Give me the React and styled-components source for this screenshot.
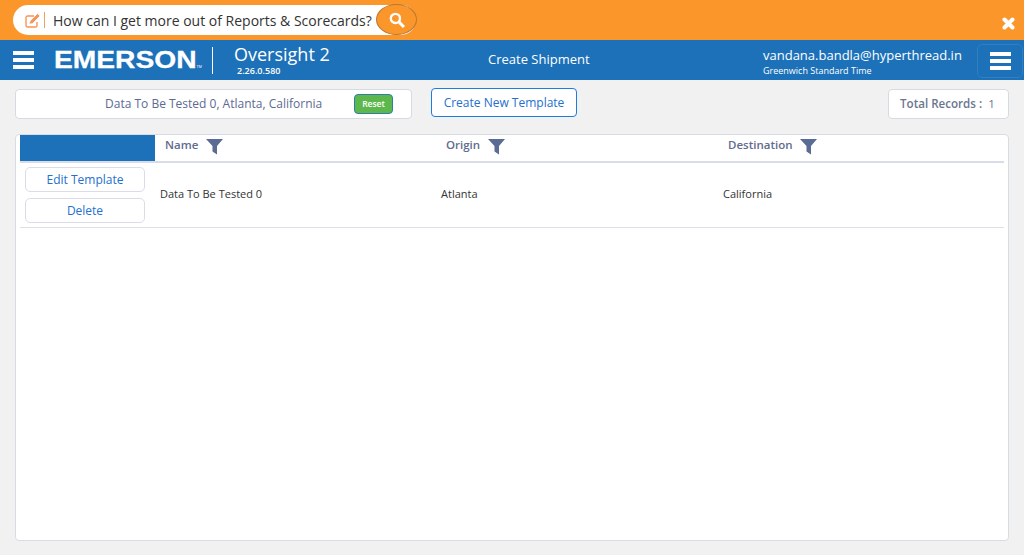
import React from "react";
import styled, { createGlobalStyle } from "styled-components";

const GlobalStyle = createGlobalStyle`
  html, body {
    margin: 0;
    height: 100%;
    background: #f1f1f1;
    font-family: "Open Sans", "Liberation Sans", sans-serif;
  }
  * { box-sizing: border-box; }
`;
const Page = styled.div`
  width: 1024px;
  height: 555px;
  display: flex;
  flex-direction: column;
  overflow: hidden;
`;
const Banner = styled.div`
  height: 40px;
  flex: none;
  background: #fb962b;
  display: flex;
  justify-content: space-between;
  padding: 5px 9px 0 13px;
`;
const SearchPill = styled.div`
  width: 403px;
  height: 30px;
  background: #fff;
  border-radius: 15px;
  display: flex;
  align-items: center;
  padding-left: 12px;
  position: relative;
`;
const Divider = styled.span`
  width: 1px;
  height: 16px;
  background: #f0a060;
  margin: 0 8px 0 3px;
`;
const Question = styled.span`
  font-size: 14px;
  color: #333;
  white-space: nowrap;
`;
const SearchButton = styled.span`
  position: absolute;
  left: 363px;
  top: -1px;
  width: 41px;
  height: 31px;
  border-radius: 50%;
  background: #fb962b;
  border: 1px solid #b9772f;
  display: flex;
  align-items: center;
  justify-content: center;
`;
const CloseMark = styled.svg`
  margin-top: 12px;
  width: 13px;
  height: 13px;
`;
const Nav = styled.div`
  height: 40px;
  flex: none;
  background: #1c71b9;
  display: flex;
  align-items: center;
  color: #fff;
  padding-left: 13px;
`;
const Burger = styled.div`
  width: 21px;
  height: 18px;
  display: flex;
  flex-direction: column;
  justify-content: space-between;
  & > i {
    display: block;
    height: 4px;
    background: #fff;
  }
`;
const Logo = styled.span`
  margin-left: 20px;
  width: 146px;
  font: 700 23.5px/40px "Liberation Sans", sans-serif;
  transform: scaleX(1.2);
  transform-origin: left center;
  white-space: nowrap;
  -webkit-text-stroke: 0.3px #fff;
`;
const LogoMark = styled.span`
  font-size: 3px;
  font-weight: 400;
  line-height: 0;
  -webkit-text-stroke: 0;
`;
const Rule = styled.span`
  width: 1px;
  height: 27px;
  background: #fff;
  margin-left: 12px;
`;
const Product = styled.div`
  margin-left: 21px;
  width: 254px;
  height: 40px;
  display: flex;
  flex-direction: column;
  padding-top: 3px;
`;
const ProductName = styled.span`
  font-size: 18px;
  line-height: 22px;
`;
const Version = styled.span`
  font-size: 9px;
  line-height: 11px;
  font-weight: 600;
  padding-left: 3px;
`;
const PageTitle = styled.span`
  font-size: 13px;
  width: 275px;
  margin-top: -2px;
`;
const User = styled.div`
  width: 214px;
  height: 40px;
  display: flex;
  flex-direction: column;
  padding-top: 6px;
`;
const Email = styled.span`
  font-size: 13px;
  line-height: 18px;
`;
const Zone = styled.span`
  font-size: 9px;
  line-height: 14px;
  font-weight: 500;
`;
const MenuButton = styled.div`
  width: 46px;
  height: 34px;
  margin-top: 2px;
  border: 1px solid #2f7fc2;
  border-radius: 5px;
  display: flex;
  align-items: center;
  justify-content: center;
`;
const Toolbar = styled.div`
  height: 54px;
  flex: none;
  padding: 8px 15px 0;
  display: flex;
  align-items: flex-start;
`;
const FilterBox = styled.div`
  width: 397px;
  height: 30px;
  margin-top: 1px;
  background: #fff;
  border: 1px solid #d5dae3;
  border-radius: 4px;
  display: flex;
  align-items: center;
  padding-left: 89px;
  font-size: 12px;
  color: #5c6a94;
`;
const FilterText = styled.span`
  width: 249px;
  white-space: nowrap;
  margin-top: -1px;
`;
const ResetButton = styled.span`
  width: 39px;
  height: 20px;
  padding-bottom: 1px;
  background: #5cb84c;
  border: 1px solid #2f7fa5;
  border-radius: 4px;
  color: #fff;
  font-size: 8.5px;
  font-weight: 600;
  display: flex;
  align-items: center;
  justify-content: center;
`;
const NewTemplate = styled.span`
  margin-left: 19px;
  width: 146px;
  height: 29px;
  background: #fff;
  border: 1px solid #1a7de0;
  border-radius: 4px;
  color: #2470d0;
  font-size: 12px;
  display: flex;
  align-items: center;
  justify-content: center;
`;
const Total = styled.div`
  margin-left: auto;
  width: 121px;
  height: 30px;
  margin-top: 1px;
  padding: 0 11px 2px;
  background: #fff;
  border: 1px solid #d5dae3;
  border-radius: 4px;
  font-size: 11.6px;
  color: #6a7690;
  display: flex;
  align-items: center;
  gap: 6px;
  & > b { font-weight: 600; }
`;
const Panel = styled.div`
  width: 994px;
  height: 407px;
  margin-left: 15px;
  background: #fff;
  border: 1px solid #d8dce5;
  border-radius: 4px;
  padding: 0 4px;
`;
const HeadRow = styled.div`
  display: grid;
  grid-template-columns: 135px 282px 282px 1fr;
  height: 28px;
  border-bottom: 2px solid #d8dce8;
`;
const BlueCell = styled.div`
  background: #1c71b9;
  height: 26px;
`;
const HeadCell = styled.div`
  display: flex;
  align-items: flex-start;
  gap: 8px;
  padding: 2px 0 0 9px;
  font-size: 11.5px;
  font-weight: 600;
  color: #5f6c8e;
  line-height: 16px;
  &:nth-child(2) {
    padding-left: 10px;
  }
`;
const Funnel = styled.svg`
  width: 17px;
  height: 17px;
  margin-top: 1px;
`;
const BodyRow = styled.div`
  display: grid;
  grid-template-columns: 135px 282px 282px 1fr;
  height: 65px;
  border-bottom: 1px solid #dcdfe6;
  align-items: center;
`;
const Actions = styled.div`
  display: flex;
  flex-direction: column;
  gap: 6px;
  padding-left: 5px;
`;
const ActionButton = styled.span`
  width: 120px;
  height: 25px;
  padding-bottom: 1px;
  border: 1px solid #dadde8;
  border-radius: 5px;
  background: #fff;
  color: #2470d0;
  font-size: 12px;
  display: flex;
  align-items: center;
  justify-content: center;
`;
const Cell = styled.span`
  font-size: 11px;
  color: #333;
  padding: 0 0 4px 5px;
  &:nth-child(n + 3) {
    padding-left: 4px;
  }
`;

const FunnelIcon = () => (
  <Funnel viewBox="0 0 17 17">
    <path d="M0 1h17l-6 7v8.5l-4.500-3V8z" fill="#5a6b94" />
  </Funnel>
);
const Bars = () => (
  <Burger>
    <i />
    <i />
    <i />
  </Burger>
);

export default function App() {
  return (
    <Page>
      <GlobalStyle />
      <Banner>
        <SearchPill>
          <svg width="16" height="15" viewBox="0 0 16 15" fill="none" stroke="#f5955a" strokeWidth="1.400">
            <path d="M12 9v3.500a1.500 1.500 0 0 1-1.500 1.500h-8A1.500 1.500 0 0 1 1 12.500v-8A1.500 1.500 0 0 1 2.500 3H9" />
            <path d="M5 8l-.8 3.300L7.500 10.500l7.500-7.500-2.500-2.500z" fill="#f5955a" stroke="#fff" strokeWidth="0.700" />
          </svg>
          <Divider />
          <Question>How can I get more out of Reports &amp; Scorecards?</Question>
          <SearchButton>
            <svg width="16" height="16" viewBox="0 0 15 15" fill="none" stroke="#fff">
              <circle cx="6" cy="6" r="4.300" strokeWidth="2.200" />
              <path d="M9.500 9.500L14 14" strokeWidth="2.800" />
            </svg>
          </SearchButton>
        </SearchPill>
        <CloseMark viewBox="0 0 13 13">
          <path d="M2.500 2.500l8 8M10.500 2.500l-8 8" stroke="#fff" strokeWidth="4" strokeLinecap="round" />
        </CloseMark>
      </Banner>
      <Nav>
        <Bars />
        <Logo>
          EMERSON<LogoMark>TM</LogoMark>
        </Logo>
        <Rule />
        <Product>
          <ProductName>Oversight 2</ProductName>
          <Version>2.26.0.580</Version>
        </Product>
        <PageTitle>Create Shipment</PageTitle>
        <User>
          <Email>vandana.bandla@hyperthread.in</Email>
          <Zone>Greenwich Standard Time</Zone>
        </User>
        <MenuButton>
          <Bars />
        </MenuButton>
      </Nav>
      <Toolbar>
        <FilterBox>
          <FilterText>Data To Be Tested 0, Atlanta, California</FilterText>
          <ResetButton>Reset</ResetButton>
        </FilterBox>
        <NewTemplate>Create New Template</NewTemplate>
        <Total>
          <b>Total Records :</b>
          <span>1</span>
        </Total>
      </Toolbar>
      <Panel>
        <HeadRow>
          <BlueCell />
          <HeadCell>
            Name
            <FunnelIcon />
          </HeadCell>
          <HeadCell>
            Origin
            <FunnelIcon />
          </HeadCell>
          <HeadCell>
            Destination
            <FunnelIcon />
          </HeadCell>
        </HeadRow>
        <BodyRow>
          <Actions>
            <ActionButton>Edit Template</ActionButton>
            <ActionButton>Delete</ActionButton>
          </Actions>
          <Cell>Data To Be Tested 0</Cell>
          <Cell>Atlanta</Cell>
          <Cell>California</Cell>
        </BodyRow>
      </Panel>
    </Page>
  );
}
